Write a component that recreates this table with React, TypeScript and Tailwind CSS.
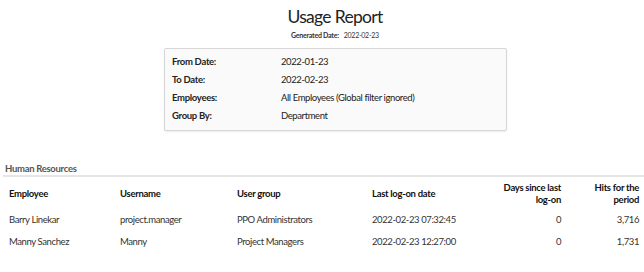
const font = { fontFamily: 'Lato, "Open Sans", sans-serif' };

const filters = [
  ["From Date:", "2022-01-23"],
  ["To Date:", "2022-02-23"],
  ["Employees:", "All Employees (Global filter ignored)"],
  ["Group By:", "Department"],
];

const rows = [
  ["Barry Linekar", "project.manager", "PPO Administrators", "2022-02-23 07:32:45", "0", "3,716"],
  ["Manny Sanchez", "Manny", "Project Managers", "2022-02-23 12:27:00", "0", "1,731"],
];

const cols = "grid grid-cols-[112px_117px_135px_115px_90px_1fr]";

export default function App() {
  return (
    <div className="h-[272px] w-[644px] overflow-hidden bg-white text-[#222]" style={font}>
      <div className="flex flex-col items-center pl-[26px] pt-[5px]">
        <h1 className="text-[17.5px] leading-[23px] tracking-[-0.7px] text-[#222]">Usage Report</h1>
        <div className="mt-[2px] text-[7px] leading-[10px] tracking-[-0.25px] text-[#333]">
          <span className="font-bold">Generated Date:</span>
          <span className="ml-[5px]">2022-02-23</span>
        </div>
      </div>

      <div className="ml-[164px] mt-[8px] w-[343px] rounded-[2px] border border-[#d6d6d6] bg-[#fafafa] px-[7px] pb-[5px] pt-[4px] shadow-[0_1px_2px_rgba(0,0,0,0.08)]">
        {filters.map(([label, value]) => (
          <div key={label} className="flex h-[18px] items-center text-[9.5px] tracking-[-0.4px]">
            <div className="w-[109px] font-bold tracking-[-0.3px] text-[#222]">{label}</div>
            <div className="text-[#222]">{value}</div>
          </div>
        ))}
      </div>

      <div className="mt-[32px] pl-[5px] text-[9.5px] font-bold leading-[12px] tracking-[-0.3px] text-[#555]">
        Human Resources
      </div>
      <div className="ml-[3px] h-[2px] bg-[#e6e6e6]" />

      <div className={`${cols} mt-[5px] items-center text-[9.5px] font-bold leading-[12px] tracking-[-0.3px] text-[#111]`}>
        <div className="pl-[9px]">Employee</div>
        <div className="pl-[8px]">Username</div>
        <div className="pl-[8px]">User group</div>
        <div className="pl-[8px]">Last log-on date</div>
        <div className="pr-[8px] text-right">Days since last<br />log-on</div>
        <div className="pr-[5px] text-right">Hits for the<br />period</div>
      </div>

      <div className="mt-[3px]">
        {rows.map((r) => (
          <div key={r[0]} className={`${cols} h-[22px] items-center text-[9.5px] tracking-[-0.4px] text-[#333]`}>
            <div className="pl-[9px]">{r[0]}</div>
            <div className="pl-[8px]">{r[1]}</div>
            <div className="pl-[8px]">{r[2]}</div>
            <div className="pl-[8px]">{r[3]}</div>
            <div className="pr-[8px] text-right">{r[4]}</div>
            <div className="pr-[5px] text-right">{r[5]}</div>
          </div>
        ))}
      </div>
    </div>
  );
}
